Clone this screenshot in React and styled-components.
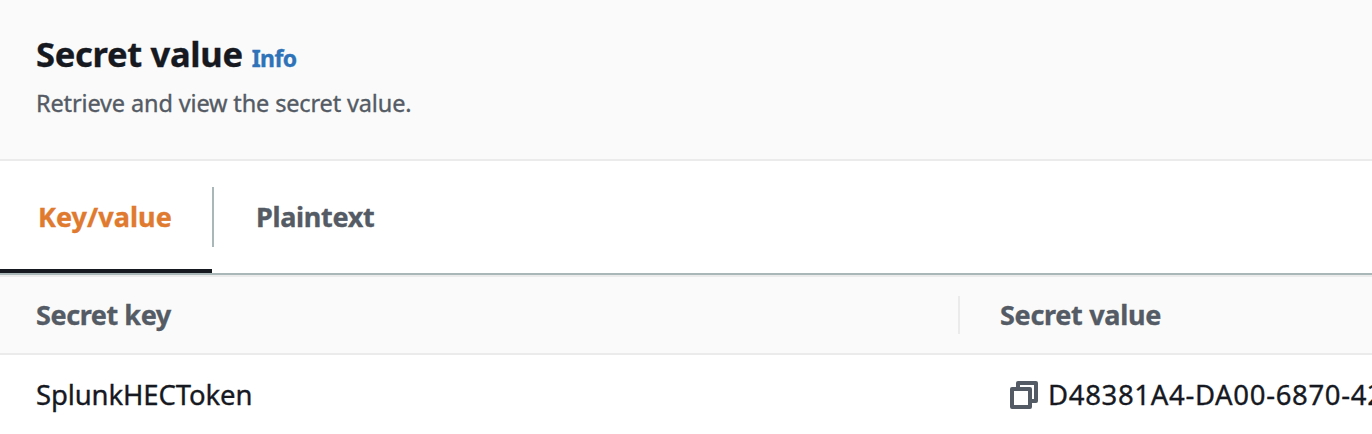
import React from "react";
import styled, { createGlobalStyle } from "styled-components";

const GlobalStyle = createGlobalStyle`
  *, *::before, *::after { box-sizing: border-box; }
  html, body { margin: 0; overflow: hidden; }
  body {
    background: #fff;
    color: #16191f;
    font-family: "Noto Sans", "Open Sans", sans-serif;
    font-size: 27.5px;
  }
`;

const Panel = styled.section`
  width: 1372px;
  height: 434px;
  overflow: hidden;
  background: #fff;
`;

const Header = styled.header`
  height: 161px;
  padding: 32px 36px 0;
  background: #fafafa;
  border-bottom: 2px solid #ebebeb;
`;

const TitleRow = styled.div`
  display: flex;
  align-items: baseline;
  gap: 9px;
  height: 44px;
  line-height: 44px;
`;

const Title = styled.h2`
  margin: 0;
  font-size: 34.5px;
  font-weight: 700;
  white-space: nowrap;
`;

const InfoLink = styled.a`
  color: #2e73b8;
  font-size: 23px;
  font-weight: 700;
`;

const Description = styled.p`
  margin: 9px 0 0;
  color: #545b64;
  font-size: 23.5px;
  line-height: 36px;
  white-space: nowrap;
`;

const TabList = styled.nav`
  display: flex;
  height: 114px;
  border-bottom: 2px solid #aab7b8;
`;

const Tab = styled.button`
  display: flex;
  align-items: center;
  height: 112px;
  width: ${(p) => (p.$active ? "212px" : "auto")};
  padding: 3px 0 0 ${(p) => (p.$active ? "38px" : "42px")};
  border: 0;
  border-bottom: 4px solid ${(p) => (p.$active ? "#16191f" : "transparent")};
  background: none;
  color: ${(p) => (p.$active ? "#e07a2f" : "#545b64")};
  font-family: inherit;
  font-size: 27px;
  font-weight: 700;
  white-space: nowrap;
`;

const TabDivider = styled.span`
  width: 2px;
  height: 60px;
  margin-top: 26px;
  background: #aab7b8;
`;

const TableHead = styled.div`
  display: flex;
  align-items: center;
  height: 80px;
  border-top: 2px solid #ebebeb;
  border-bottom: 2px solid #ebebeb;
  background: #fafafa;
`;

const HeadCell = styled.div`
  width: ${(p) => p.$width};
  height: 38px;
  padding-left: ${(p) => p.$inset};
  border-right: ${(p) => (p.$divided ? "2px solid #ebebeb" : "0")};
  color: #545b64;
  font-size: 27px;
  font-weight: 700;
  line-height: 38px;
  white-space: nowrap;
`;

const Row = styled.div`
  display: flex;
  align-items: center;
  height: 80px;
`;

const KeyCell = styled.div`
  width: 1010px;
  flex: none;
  padding: 0 0 2px 36px;
`;

const ValueCell = styled.div`
  display: flex;
  flex: none;
  align-items: center;
  gap: 10px;
  white-space: nowrap;
`;

const Label = styled.span`
  letter-spacing: ${(p) => p.$tracking || 0}px;
  padding-bottom: ${(p) => p.$lift || 0}px;
  -webkit-text-stroke: 0.35px currentColor;
`;

const CopyIcon = () => (
  <svg width="28" height="28" viewBox="0 0 28 28" fill="none" stroke="#545b64" strokeWidth="4" strokeLinejoin="round">
    <path d="M8 6V2H26V20H22" />
    <path d="M2 8H20V26H2Z" />
  </svg>
);

export default function App() {
  return (
    <>
      <GlobalStyle />
      <Panel>
        <Header>
          <TitleRow>
            <Title><Label $tracking={-0.3}>Secret value</Label></Title>
            <InfoLink><Label $tracking={-0.6}>Info</Label></InfoLink>
          </TitleRow>
          <Description><Label $tracking={-0.14}>Retrieve and view the secret value.</Label></Description>
        </Header>
        <TabList>
          <Tab $active><Label $tracking={0.05}>Key/value</Label></Tab>
          <TabDivider />
          <Tab><Label $tracking={-0.3}>Plaintext</Label></Tab>
        </TabList>
        <TableHead>
          <HeadCell $width="960px" $inset="36px" $divided><Label $tracking={-0.42}>Secret key</Label></HeadCell>
          <HeadCell $width="412px" $inset="40px"><Label $tracking={-0.3}>Secret value</Label></HeadCell>
        </TableHead>
        <Row>
          <KeyCell><Label $tracking={-0.12}>SplunkHECToken</Label></KeyCell>
          <ValueCell>
            <CopyIcon />
            <Label $tracking={0.67} $lift={2}>D48381A4-DA00-6870-42</Label>
          </ValueCell>
        </Row>
      </Panel>
    </>
  );
}
